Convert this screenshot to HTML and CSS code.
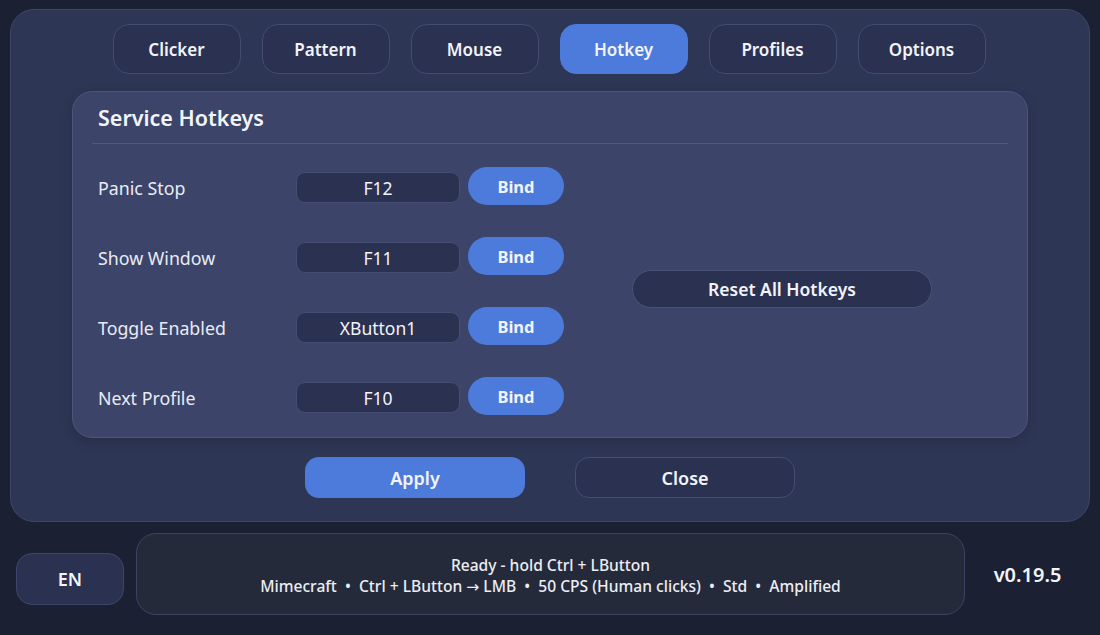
FILE: index.html
```html
<!DOCTYPE html>
<html lang="en">
<head>
<meta charset="utf-8">
<title>Service Hotkeys</title>
<link rel="stylesheet" href="styles.css">
</head>
<body>
<div class="window">
  <nav class="tabs">
    <button class="tab">Clicker</button>
    <button class="tab">Pattern</button>
    <button class="tab">Mouse</button>
    <button class="tab active">Hotkey</button>
    <button class="tab">Profiles</button>
    <button class="tab">Options</button>
  </nav>

  <section class="card">
    <h2 class="card-title">Service Hotkeys</h2>
    <div class="card-body">
      <div class="rows">
        <div class="row">
          <span class="label">Panic Stop</span>
          <span class="keybox">F12</span>
          <button class="bind">Bind</button>
        </div>
        <div class="row">
          <span class="label">Show Window</span>
          <span class="keybox">F11</span>
          <button class="bind">Bind</button>
        </div>
        <div class="row">
          <span class="label">Toggle Enabled</span>
          <span class="keybox">XButton1</span>
          <button class="bind">Bind</button>
        </div>
        <div class="row">
          <span class="label">Next Profile</span>
          <span class="keybox">F10</span>
          <button class="bind">Bind</button>
        </div>
      </div>
      <div class="side">
        <button class="reset">Reset All Hotkeys</button>
      </div>
    </div>
  </section>

  <div class="actions">
    <button class="btn primary">Apply</button>
    <button class="btn secondary">Close</button>
  </div>
</div>

<footer class="footer">
  <button class="lang">EN</button>
  <div class="status">
    <div>Ready - hold Ctrl + LButton</div>
    <div>Mimecraft &nbsp;•&nbsp; Ctrl + LButton → LMB &nbsp;•&nbsp; 50 CPS (Human clicks) &nbsp;•&nbsp; Std &nbsp;•&nbsp; Amplified</div>
  </div>
  <div class="version">v0.19.5</div>
</footer>
</body>
</html>
```

FILE: styles.css
```css
* { box-sizing: border-box; }

html, body {
  margin: 0;
  padding: 0;
}

body {
  width: 1100px;
  height: 635px;
  overflow: hidden;
  background: #1b2033;
  font-family: "Noto Sans", "Open Sans", "DejaVu Sans", sans-serif;
  color: #f2f4fa;
}

button {
  font-family: inherit;
  color: inherit;
  cursor: pointer;
}

.window {
  margin: 9px 10px 0;
  height: 513px;
  border: 1px solid #3d4668;
  border-radius: 24px;
  background: #2e3655;
  padding-top: 14px;
}

.tabs {
  display: flex;
  justify-content: center;
  gap: 21px;
  padding-right: 2px;
}

.tab {
  width: 128px;
  height: 50px;
  border-radius: 16px;
  border: 1px solid #434c6e;
  background: #2b3150;
  font-size: 17px;
  font-weight: 600;
  padding: 0;
}

.tab.active {
  background: #4d7bdb;
  border-color: #4d7bdb;
}

.card {
  width: 956px;
  margin: 17px auto 0;
  background: #3c4469;
  border: 1px solid #4b5479;
  border-radius: 20px;
  padding: 0 19px 22px;
  box-shadow: 0 4px 10px rgba(20, 24, 40, 0.25);
}

.card-title {
  margin: 0;
  padding: 11px 6px 10px;
  font-size: 21.5px;
  font-weight: 600;
  line-height: 30px;
  border-bottom: 1px solid #4f5980;
}

.card-body {
  display: flex;
  align-items: center;
  padding: 23px 6px 0;
}

.rows {
  display: flex;
  flex-direction: column;
  gap: 32px;
}

.row {
  display: flex;
  align-items: center;
  height: 38px;
}

.label {
  width: 198px;
  font-size: 17.8px;
  color: #e9ecf5;
  padding-top: 4px;
}

.keybox {
  width: 164px;
  height: 31px;
  margin-top: 3px;
  display: flex;
  align-items: center;
  justify-content: center;
  background: #2b3150;
  border: 1px solid #454e72;
  border-radius: 9px;
  font-size: 17.5px;
}

.bind {
  width: 96px;
  height: 38px;
  margin-left: 8px;
  border: none;
  border-radius: 19px;
  background: #4d7bdb;
  font-size: 16.5px;
  font-weight: 700;
  padding: 0;
}

.side {
  margin-left: 68px;
  margin-bottom: 4px;
}

.reset {
  width: 300px;
  height: 38px;
  border-radius: 19px;
  border: 1px solid #4a5377;
  background: #2b3150;
  font-size: 17.5px;
  font-weight: 600;
  padding: 0;
}

.actions {
  display: flex;
  justify-content: center;
  gap: 50px;
  margin-top: 19px;
}

.btn {
  width: 220px;
  height: 41px;
  border-radius: 14px;
  font-size: 18px;
  font-weight: 600;
  padding: 0;
}

.btn.primary {
  background: #4d7bdb;
  border: none;
}

.btn.secondary {
  background: #2b3150;
  border: 1px solid #454e72;
}

.footer {
  display: flex;
  align-items: center;
  padding: 11px 0 0 16px;
}

.lang {
  width: 108px;
  height: 52px;
  margin-top: 9px;
  border-radius: 16px;
  border: 1px solid #3d4668;
  background: #2b3150;
  font-size: 18px;
  font-weight: 600;
  padding: 0;
}

.status {
  width: 829px;
  height: 82px;
  margin-left: 12px;
  border: 1px solid #3a4462;
  border-radius: 20px;
  background: #252a3b;
  display: flex;
  flex-direction: column;
  justify-content: center;
  align-items: center;
  font-size: 15.6px;
  font-weight: 500;
  line-height: 21px;
  color: #eceef4;
  padding-top: 3px;
}

.version {
  flex: 1;
  text-align: center;
  font-size: 20px;
  font-weight: 600;
  padding-right: 10px;
}
```
